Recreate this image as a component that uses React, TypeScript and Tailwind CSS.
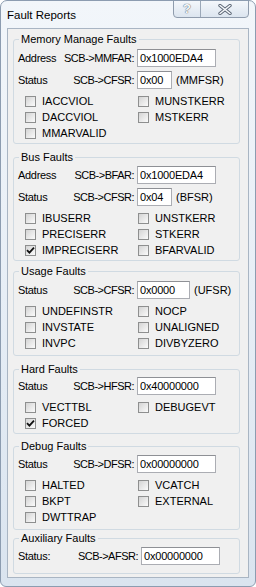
import React from "react";

function Check({ checked }: { checked?: boolean }) {
  return (
    <span className="flex h-[11px] w-[11px] shrink-0 items-center justify-center border border-[#8e8f8f] bg-gradient-to-br from-[#d4d4d4] to-[#fbfbfb]">
      {checked && (
        <svg width="9" height="9" viewBox="0 0 9 9">
          <path d="M1 4.2 L3.4 6.6 L8 1.6" fill="none" stroke="#111" strokeWidth="1.8" />
        </svg>
      )}
    </span>
  );
}

function CheckItem({ label, checked }: { label: string; checked?: boolean }) {
  return (
    <div className="flex items-center">
      <Check checked={checked} />
      <span className="ml-[6px]">{label}</span>
    </div>
  );
}

function CheckRow({ a, b, ac, bc }: { a: string; b?: string; ac?: boolean; bc?: boolean }) {
  return (
    <div className="flex h-[16px] items-center">
      <div className="w-[124px] pl-[11px]">
        <CheckItem label={a} checked={ac} />
      </div>
      {b && <CheckItem label={b} checked={bc} />}
    </div>
  );
}

function Field({
  left,
  reg,
  value,
  width,
  suffix,
  labelW = "w-[120px]",
  gap = "ml-[3px]",
}: {
  left: string;
  reg: string;
  value: string;
  width: string;
  suffix?: string;
  labelW?: string;
  gap?: string;
}) {
  return (
    <div className="flex h-[18px] items-center">
      <div className={`${labelW} flex justify-between pl-[4px]`}>
        <span className="tracking-[-0.3px]">{left}</span>
        <span className="tracking-[-0.5px]">{reg}</span>
      </div>
      <div className={`${gap} ${width} flex h-[18px] items-center border border-[#abadb3] border-t-[#8e9095] bg-white pl-[2px] tracking-[-0.2px]`}>
        {value}
      </div>
      {suffix && <span className="ml-[4px]">{suffix}</span>}
    </div>
  );
}

function Group({
  title,
  className,
  children,
}: {
  title: string;
  className: string;
  children: React.ReactNode;
}) {
  return (
    <div className={`relative ml-[5px] w-[227px] rounded-[3px] border border-[#d0dae2] ${className}`}>
      <span className="absolute -top-[7px] left-[5px] bg-[#f0f0f0] px-[2px] leading-[13px] text-[#000]">
        {title}
      </span>
      {children}
    </div>
  );
}

export default function App() {
  return (
    <div className="relative h-[587px] w-[256px] overflow-hidden rounded-t-[7px] rounded-b-[6px] border border-[#8c9cb0] bg-gradient-to-b from-[#f2f6fa] via-[#e7eef6] to-[#dae4ef] font-['Liberation_Sans',Arial,sans-serif] text-[11px] leading-[13px] text-black">
      <div className="flex h-[27px] items-start justify-between">
        <span className="mt-[7px] pl-[6px] text-[11.5px] leading-[14px] text-black">Fault Reports</span>
        <div className="mr-[6px] -mt-px flex h-[18px] overflow-hidden rounded-b-[4px] border border-[#8f9cad] bg-gradient-to-b from-[#f4f7fb] to-[#dce5ef]">
          <div className="flex w-[27px] items-center justify-center border-r border-[#9ba8b8] text-[13px] font-bold leading-[14px] text-[#f8fafc] [text-shadow:0_0_1px_#55606e,0_0_1px_#55606e]">
            ?
          </div>
          <div className="flex w-[47px] items-center justify-center">
            <svg width="14" height="11" viewBox="0 0 14 11">
              <path d="M2 1.5 L12 9.5 M12 1.5 L2 9.5" stroke="#5b6675" strokeWidth="3.4" strokeLinecap="round" />
              <path d="M2 1.5 L12 9.5 M12 1.5 L2 9.5" stroke="#f5f7fa" strokeWidth="1.6" strokeLinecap="round" />
            </svg>
          </div>
        </div>
      </div>
      <div className="ml-[6px] h-[550px] w-[242px] border border-[#a9b5c3] bg-[#f0f0f0] pt-[10px]">
        <Group title="Memory Manage Faults" className="h-[105px] pt-[9px]">
          <Field left="Address" reg="SCB->MMFAR:" value="0x1000EDA4" width="w-[79px]" />
          <div className="mt-[4px]">
            <Field left="Status" reg="SCB->CFSR:" value="0x00" width="w-[35px]" suffix="(MMFSR)" />
          </div>
          <div className="mt-[4px]">
            <CheckRow a="IACCVIOL" b="MUNSTKERR" />
            <CheckRow a="DACCVIOL" b="MSTKERR" />
            <CheckRow a="MMARVALID" />
          </div>
        </Group>
        <Group title="Bus Faults" className="mt-[13px] h-[104px] pt-[8px]">
          <Field left="Address" reg="SCB->BFAR:" value="0x1000EDA4" width="w-[79px]" />
          <div className="mt-[4px]">
            <Field left="Status" reg="SCB->CFSR:" value="0x04" width="w-[35px]" suffix="(BFSR)" />
          </div>
          <div className="mt-[4px]">
            <CheckRow a="IBUSERR" b="UNSTKERR" />
            <CheckRow a="PRECISERR" b="STKERR" />
            <CheckRow a="IMPRECISERR" b="BFARVALID" ac />
          </div>
        </Group>
        <Group title="Usage Faults" className="mt-[10px] h-[85px] pt-[9px]">
          <Field left="Status" reg="SCB->CFSR:" value="0x0000" width="w-[53px]" suffix="(UFSR)" />
          <div className="mt-[4px]">
            <CheckRow a="UNDEFINSTR" b="NOCP" />
            <CheckRow a="INVSTATE" b="UNALIGNED" />
            <CheckRow a="INVPC" b="DIVBYZERO" />
          </div>
        </Group>
        <Group title="Hard Faults" className="mt-[13px] h-[65px] pt-[7px]">
          <Field left="Status" reg="SCB->HFSR:" value="0x40000000" width="w-[79px]" />
          <div className="mt-[4px]">
            <CheckRow a="VECTTBL" b="DEBUGEVT" />
            <CheckRow a="FORCED" ac />
          </div>
        </Group>
        <Group title="Debug Faults" className="mt-[12px] h-[84px] pt-[8px]">
          <Field left="Status" reg="SCB->DFSR:" value="0x00000000" width="w-[79px]" />
          <div className="mt-[4px]">
            <CheckRow a="HALTED" b="VCATCH" />
            <CheckRow a="BKPT" b="EXTERNAL" />
            <CheckRow a="DWTTRAP" />
          </div>
        </Group>
        <Group title="Auxiliary Faults" className="mt-[8px] h-[36px] pt-[8px]">
          <Field
            left="Status:"
            reg="SCB->AFSR:"
            value="0x00000000"
            width="w-[79px]"
            labelW="w-[124px] pl-[3px]"
          />
        </Group>
      </div>
    </div>
  );
}
